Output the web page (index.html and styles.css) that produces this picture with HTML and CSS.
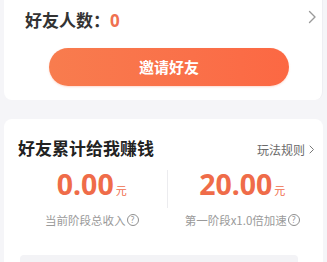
FILE: index.html
```html
<!DOCTYPE html>
<html lang="zh-CN">
<head>
<meta charset="utf-8">
<link rel="stylesheet" href="styles.css">
</head>
<body>
<div class="card top-card">
  <div class="friend-row">
    <div class="friend-count">好友人数：<span class="count-num">0</span></div>
    <svg class="chev-big" width="9" height="14" viewBox="0 0 9 14"><path d="M1.5 1.5 L7 7 L1.5 12.5" fill="none" stroke="#9a9a9a" stroke-width="1.4" stroke-linecap="round" stroke-linejoin="round"/></svg>
  </div>
  <div class="invite-btn">邀请好友</div>
</div>
<div class="card earn-card">
  <div class="earn-head">
    <div class="earn-title">好友累计给我赚钱</div>
    <div class="rules">玩法规则<svg class="chev-small" width="6" height="9" viewBox="0 0 6 9"><path d="M1 1 L4.5 4.5 L1 8" fill="none" stroke="#777" stroke-width="1" stroke-linecap="round" stroke-linejoin="round"/></svg></div>
  </div>
  <div class="stats">
    <div class="stat">
      <div class="amount"><span class="num">0.00</span><span class="unit">元</span></div>
      <div class="label">当前阶段总收入<span class="qmark">?</span></div>
    </div>
    <div class="divider"></div>
    <div class="stat">
      <div class="amount"><span class="num">20.00</span><span class="unit">元</span></div>
      <div class="label">第一阶段x1.0倍加速<span class="qmark">?</span></div>
    </div>
  </div>
  <div class="progress-box"></div>
</div>
</body>
</html>
```
FILE: styles.css
```css
html, body {
  margin: 0;
  padding: 0;
}
body {
  background: #f5f5f8;
  font-family: "Noto Sans CJK SC", "Noto Sans", sans-serif;
  width: 327px;
  height: 262px;
  overflow: hidden;
}
.card {
  background: #ffffff;
  margin: 0 4px;
}
.top-card {
  height: 100px;
  box-sizing: border-box;
  border-radius: 0 0 8px 8px;
  border-right: 1px solid #eeeef2;
  padding-top: 8px;
}
.friend-row {
  display: flex;
  justify-content: space-between;
  align-items: flex-start;
  padding: 0 5px 0 21px;
}
.friend-count {
  font-size: 17px;
  line-height: 24px;
  font-weight: bold;
  color: #333333;
}
.count-num {
  font-family: "Noto Sans", sans-serif;
  color: #ef7150;
}
.chev-big {
  margin-top: 2px;
}
.invite-btn {
  margin: 15px 0 0 45px;
  width: 240px;
  height: 38px;
  border-radius: 19px;
  background: linear-gradient(90deg, #f87c4e 0%, #fa7049 60%, #fc6843 100%);
  color: #ffffff;
  font-size: 15px;
  font-weight: bold;
  line-height: 38px;
  text-align: center;
  box-shadow: 0 1px 2px rgba(250, 110, 70, 0.25);
}
.earn-card {
  margin-top: 19px;
  border-radius: 8px 8px 0 0;
  height: 143px;
  box-sizing: border-box;
  padding-top: 17px;
}
.earn-head {
  display: flex;
  justify-content: space-between;
  align-items: center;
  padding: 0 8px 0 14px;
  height: 24px;
}
.earn-title {
  font-size: 17px;
  line-height: 24px;
  font-weight: bold;
  color: #222222;
}
.rules {
  font-size: 12px;
  color: #6a6a6a;
  display: flex;
  align-items: center;
  margin-top: 2px;
}
.chev-small {
  margin-left: 4px;
}
.stats {
  display: flex;
  margin: 9px 6px 0 13px;
}
.stat {
  flex: 1;
  display: flex;
  flex-direction: column;
  align-items: center;
}
.amount {
  color: #ef6c49;
  line-height: 30px;
  height: 30px;
  white-space: nowrap;
}
.num {
  font-family: "Noto Sans", sans-serif;
  font-weight: bold;
  font-size: 28.5px;
}
.unit {
  font-size: 11px;
  margin-left: 2px;
}
.label {
  margin-top: 13px;
  font-size: 11.5px;
  line-height: 16px;
  color: #9a9a9a;
  display: flex;
  align-items: center;
  white-space: nowrap;
}
.qmark {
  display: inline-block;
  width: 10px;
  height: 10px;
  border: 1px solid #8f8f8f;
  border-radius: 50%;
  font-family: "Noto Sans", sans-serif;
  font-size: 8px;
  line-height: 10px;
  text-align: center;
  color: #8f8f8f;
  margin-left: 1px;
}
.divider {
  width: 1px;
  height: 38px;
  margin-top: 1px;
  background: #ececef;
}
.progress-box {
  margin: 27px 0 0 16px;
  width: 278px;
  height: 7px;
  background: #f3f3f6;
  border-radius: 4px 4px 0 0;
}
```
